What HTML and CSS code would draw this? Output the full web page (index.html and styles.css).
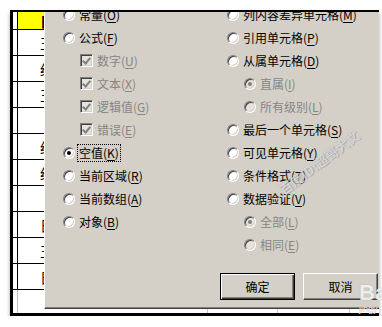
FILE: index.html
```html
<!DOCTYPE html>
<html lang="zh-CN">
<head>
<meta charset="utf-8">
<title>定位条件</title>
<link rel="stylesheet" href="styles.css">
</head>
<body>
<div class="frame">
  <div class="sheet">
    <div class="row head"><div class="ca"></div><div class="cb"><span>日</span></div></div>
    <div class="row"><div class="ca"></div><div class="cb"><span>王</span></div></div>
    <div class="row"><div class="ca"></div><div class="cb"><span>红</span></div></div>
    <div class="row"><div class="ca"></div><div class="cb"><span>王</span></div></div>
    <div class="row"><div class="ca"></div><div class="cb"></div></div>
    <div class="row"><div class="ca"></div><div class="cb"><span>红</span></div></div>
    <div class="row"><div class="ca"></div><div class="cb"><span>红</span></div></div>
    <div class="row"><div class="ca"></div><div class="cb"></div></div>
    <div class="row"><div class="ca"></div><div class="cb"><span>日</span></div></div>
    <div class="row"><div class="ca"></div><div class="cb"><span>王</span></div></div>
    <div class="row"><div class="ca"></div><div class="cb"><span>日</span></div></div>
    <div class="row last"><div class="ca"></div><div class="cb"></div><div class="cc"></div><div class="cd"></div><div class="ce"></div></div>
  </div>

  <div class="dialog">
    <div class="opts">
      <div class="col">
        <div class="opt"><span class="radio"></span><span class="lbl">常量(<u>O</u>)</span></div>
        <div class="opt"><span class="radio"></span><span class="lbl">公式(<u>F</u>)</span></div>
        <div class="opt sub dis"><span class="check"></span><span class="lbl">数字(<u>U</u>)</span></div>
        <div class="opt sub dis"><span class="check"></span><span class="lbl">文本(<u>X</u>)</span></div>
        <div class="opt sub dis"><span class="check"></span><span class="lbl">逻辑值(<u>G</u>)</span></div>
        <div class="opt sub dis"><span class="check"></span><span class="lbl">错误(<u>E</u>)</span></div>
        <div class="opt"><span class="radio on"></span><span class="lbl focus">空值(<u>K</u>)</span></div>
        <div class="opt"><span class="radio"></span><span class="lbl">当前区域(<u>R</u>)</span></div>
        <div class="opt"><span class="radio"></span><span class="lbl">当前数组(<u>A</u>)</span></div>
        <div class="opt"><span class="radio"></span><span class="lbl">对象(<u>B</u>)</span></div>
      </div>
      <div class="col">
        <div class="opt"><span class="radio"></span><span class="lbl">列内容差异单元格(<u>M</u>)</span></div>
        <div class="opt"><span class="radio"></span><span class="lbl">引用单元格(<u>P</u>)</span></div>
        <div class="opt"><span class="radio"></span><span class="lbl">从属单元格(<u>D</u>)</span></div>
        <div class="opt sub dis"><span class="radio on"></span><span class="lbl">直属(<u>I</u>)</span></div>
        <div class="opt sub dis"><span class="radio"></span><span class="lbl">所有级别(<u>L</u>)</span></div>
        <div class="opt"><span class="radio"></span><span class="lbl">最后一个单元格(<u>S</u>)</span></div>
        <div class="opt"><span class="radio"></span><span class="lbl">可见单元格(<u>Y</u>)</span></div>
        <div class="opt"><span class="radio"></span><span class="lbl">条件格式(<u>T</u>)</span></div>
        <div class="opt"><span class="radio"></span><span class="lbl">数据验证(<u>V</u>)</span></div>
        <div class="opt sub dis"><span class="radio on"></span><span class="lbl">全部(<u>L</u>)</span></div>
        <div class="opt sub dis"><span class="radio"></span><span class="lbl">相同(<u>E</u>)</span></div>
      </div>
    </div>
    <div class="btns">
      <button class="btn default">确定</button>
      <button class="btn">取消</button>
    </div>
  </div>

  <div class="wm-diag">百度ID:超哥大文</div>
  <div class="wm-baidu"><span class="bai">Ba</span><span class="jy">jingy</span></div>
</div>
</body>
</html>
```
FILE: styles.css
```css
html, body {
  margin: 0;
  background: #fff;
}
body {
  font-family: "Noto Sans CJK SC", "Liberation Sans", sans-serif;
}

.frame {
  position: relative;
  box-sizing: border-box;
  margin: 10px 0 0 10px;
  width: 369px;
  height: 306px;
  border-top: 2px solid #000;
  border-left: 3px solid #000;
  border-bottom: 3px solid #000;
  background: #fff;
  box-shadow: 0 3px 4px rgba(0, 0, 0, 0.35);
}

/* spreadsheet underneath */
.sheet {
  display: flex;
  flex-direction: column;
  height: 100%;
  overflow: hidden;
}
.row {
  display: flex;
  flex: none;
  box-sizing: border-box;
  height: 26px;
  border-bottom: 1px solid #000;
}
.row.head { height: 18px; }
.row.last {
  flex: 1;
  border-bottom: none;
}
.ca {
  width: 5px;
  box-sizing: border-box;
  border-right: 1px solid #000;
}
.last .ca { border-right-color: #c0c0c0; }
.cb {
  width: 189px;
  box-sizing: border-box;
  padding-left: 22px;
  display: flex;
  align-items: center;
  font-size: 14px;
  color: #000;
}
.head .cb {
  background: #ffff00;
  font-weight: bold;
}
.cc, .cd, .ce {
  box-sizing: border-box;
  border-left: 1px solid #c8c8c8;
}
.cc { width: 70px; }
.cd { width: 72px; }
.ce { flex: 1; }

/* dialog window lying over the sheet */
.dialog {
  position: absolute;
  left: 31px;
  top: 0;
  right: 0;
  height: 297px;
  box-sizing: border-box;
  background: #d4d0c8;
  border-left: 1px solid #ffffff;
  border-bottom: 1px solid #404040;
  box-shadow: inset 0 -1px 0 #808080;
  overflow: hidden;
  font-size: 12px;
  color: #000;
}
.opts {
  display: grid;
  grid-template-columns: 164px 1fr;
  padding-left: 18px;
  margin-top: -9px;
}
.col {
  display: flex;
  flex-direction: column;
}
.opt {
  display: flex;
  align-items: center;
  gap: 4px;
  height: 23px;
  white-space: nowrap;
}
.opt.sub { padding-left: 17px; }
.lbl { line-height: 16px; }
.lbl u { text-decoration-thickness: 1px; text-underline-offset: 2px; }
.dis .lbl { color: #868686; }
.lbl.focus {
  outline: 1px dotted #000;
  outline-offset: 0;
  padding: 0 1px;
  margin-left: -1px;
}

.radio {
  position: relative;
  flex: none;
  width: 12px;
  height: 12px;
  box-sizing: border-box;
  border-radius: 50%;
  border: 1px solid;
  border-color: #808080 #ffffff #ffffff #808080;
  box-shadow: inset 1px 1px 0 #404040, inset -1px -1px 0 #d4d0c8;
  background: #fff;
}
.dis .radio { background: #e6e3dd; }
.radio.on::after {
  content: "";
  position: absolute;
  left: 3px;
  top: 3px;
  width: 4px;
  height: 4px;
  border-radius: 50%;
  background: #000;
}
.dis .radio.on::after { background: #808080; }

.check {
  position: relative;
  flex: none;
  width: 13px;
  height: 13px;
  box-sizing: border-box;
  border: 1px solid;
  border-color: #808080 #ffffff #ffffff #808080;
  box-shadow: inset 1px 1px 0 #404040, inset -1px -1px 0 #d4d0c8;
  background: #e6e3dd;
}
.check::after {
  content: "";
  position: absolute;
  left: 3px;
  top: 1px;
  width: 3px;
  height: 6px;
  border-right: 2px solid #808080;
  border-bottom: 2px solid #808080;
  transform: rotate(40deg);
}

.btns {
  display: flex;
  justify-content: flex-end;
  gap: 8px;
  margin-top: 17px;
  padding-right: 1px;
}
.btn {
  width: 75px;
  height: 27px;
  box-sizing: border-box;
  margin: 0;
  padding: 0;
  font-family: inherit;
  font-size: 12px;
  color: #000;
  background: #d4d0c8;
  border: 1px solid;
  border-color: #ffffff #404040 #404040 #ffffff;
  box-shadow: inset -1px -1px 0 #808080;
  border-radius: 0;
}
.btn.default {
  border-color: #000;
  box-shadow: inset 1px 1px 0 #ffffff, inset -1px -1px 0 #404040, inset -2px -2px 0 #808080;
}

/* watermarks */
.wm-diag {
  position: absolute;
  left: 250px;
  top: 141px;
  width: 112px;
  text-align: center;
  font-size: 13px;
  font-weight: bold;
  color: rgba(255, 255, 255, 0.6);
  text-shadow: 0 0 1px rgba(90, 90, 100, 0.45), 1px 1px 0 rgba(120, 120, 130, 0.35);
  transform: rotate(-37deg);
  white-space: nowrap;
}
.wm-baidu {
  position: absolute;
  left: 346px;
  top: 270px;
  display: flex;
  flex-direction: column;
  line-height: 1;
  font-family: "Liberation Sans", sans-serif;
  color: rgba(255, 255, 255, 0.85);
  text-shadow: 0 0 1px rgba(120, 120, 120, 0.7);
}
.wm-baidu .bai {
  font-size: 22px;
  font-weight: bold;
}
.wm-baidu .jy {
  font-size: 9px;
  margin-top: 1px;
}
```
